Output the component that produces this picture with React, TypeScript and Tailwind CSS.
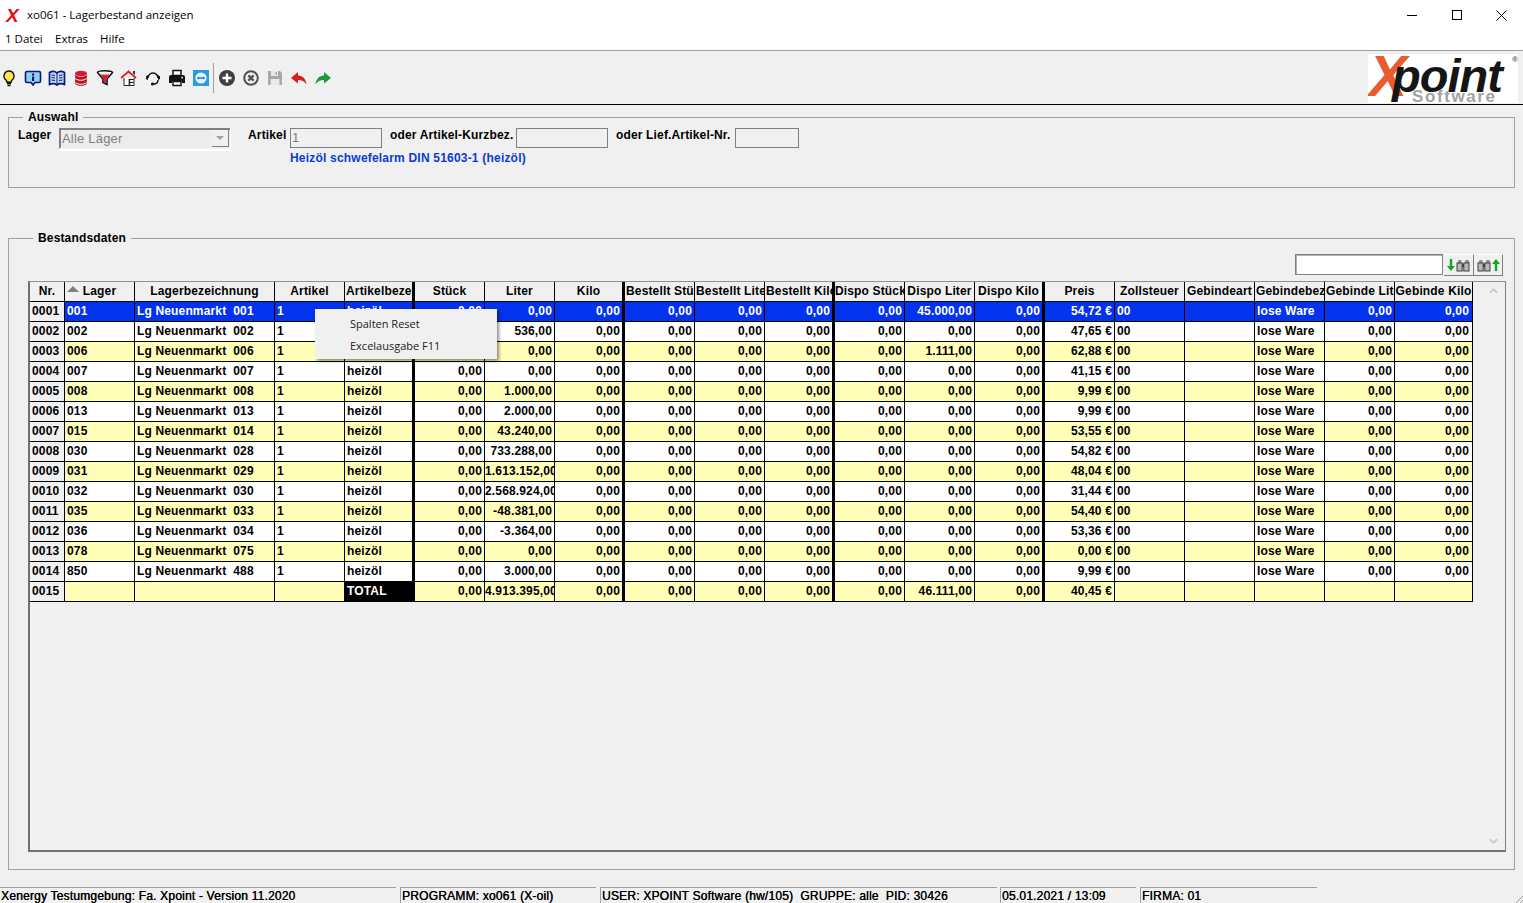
import React from "react";

type Col = { t: string; w: string; a: "l" | "r" | "c"; thick?: boolean; hl?: boolean };
const cols: Col[] = [
  { t: "Nr.", w: "w-[35px]", a: "c" },
  { t: "Lager", w: "w-[70px]", a: "c" },
  { t: "Lagerbezeichnung", w: "w-[140px]", a: "c" },
  { t: "Artikel", w: "w-[70px]", a: "c" },
  { t: "Artikelbezeichnung", w: "w-[70px]", a: "l", thick: true },
  { t: "Stück", w: "w-[70px]", a: "c" },
  { t: "Liter", w: "w-[70px]", a: "c" },
  { t: "Kilo", w: "w-[70px]", a: "c", thick: true },
  { t: "Bestellt Stück", w: "w-[70px]", a: "l" },
  { t: "Bestellt Liter", w: "w-[70px]", a: "l" },
  { t: "Bestellt Kilo", w: "w-[70px]", a: "l", thick: true },
  { t: "Dispo Stück", w: "w-[70px]", a: "c" },
  { t: "Dispo Liter", w: "w-[70px]", a: "c" },
  { t: "Dispo Kilo", w: "w-[70px]", a: "c", thick: true },
  { t: "Preis", w: "w-[70px]", a: "c" },
  { t: "Zollsteuer", w: "w-[70px]", a: "c" },
  { t: "Gebindeart", w: "w-[70px]", a: "c" },
  { t: "Gebindebez", w: "w-[70px]", a: "l" },
  { t: "Gebinde Liter", w: "w-[70px]", a: "l" },
  { t: "Gebinde Kilo", w: "w-[78px]", a: "c" },
];

const data: [string, string, string, string, string, string][] = [
  ["001", "001", "0,00", "0,00", "45.000,00", "54,72 €"],
  ["002", "002", "0,00", "536,00", "0,00", "47,65 €"],
  ["006", "006", "0,00", "0,00", "1.111,00", "62,88 €"],
  ["007", "007", "0,00", "0,00", "0,00", "41,15 €"],
  ["008", "008", "0,00", "1.000,00", "0,00", "9,99 €"],
  ["013", "013", "0,00", "2.000,00", "0,00", "9,99 €"],
  ["015", "014", "0,00", "43.240,00", "0,00", "53,55 €"],
  ["030", "028", "0,00", "733.288,00", "0,00", "54,82 €"],
  ["031", "029", "0,00", "1.613.152,00", "0,00", "48,04 €"],
  ["032", "030", "0,00", "2.568.924,00", "0,00", "31,44 €"],
  ["035", "033", "0,00", "-48.381,00", "0,00", "54,40 €"],
  ["036", "034", "0,00", "-3.364,00", "0,00", "53,36 €"],
  ["078", "075", "0,00", "0,00", "0,00", "0,00 €"],
  ["850", "488", "0,00", "3.000,00", "0,00", "9,99 €"],
];

function rowValues(i: number): { v: string; a: "l" | "r" }[] {
  const z = { v: "0,00", a: "r" as const };
  if (i === 14) {
    return [
      { v: "0015", a: "l" }, { v: "", a: "l" }, { v: "", a: "l" }, { v: "", a: "l" }, { v: "TOTAL", a: "l" },
      z, { v: "4.913.395,00", a: "r" }, z, z, z, z, z, { v: "46.111,00", a: "r" }, z, { v: "40,45 €", a: "r" },
      { v: "", a: "l" }, { v: "", a: "l" }, { v: "", a: "l" }, { v: "", a: "l" }, { v: "", a: "l" },
    ];
  }
  const d = data[i];
  return [
    { v: String(i + 1).padStart(4, "0"), a: "l" },
    { v: d[0], a: "l" },
    { v: "Lg Neuenmarkt  " + d[1], a: "l" },
    { v: "1", a: "l" },
    { v: "heizöl", a: "l" },
    { v: d[2], a: "r" },
    { v: d[3], a: "r" },
    z, z, z, z, z,
    { v: d[4], a: "r" },
    z,
    { v: d[5], a: "r" },
    { v: "00", a: "l" },
    { v: "", a: "l" },
    { v: "lose Ware", a: "l" },
    z, z,
  ];
}

function Row({ i }: { i: number }) {
  const selected = i === 0;
  const yellow = i % 2 === 0;
  const vals = rowValues(i);
  return (
    <div className="flex h-5 whitespace-pre">
      {cols.map((c, k) => {
        const v = vals[k];
        const nr = k === 0;
        const total = i === 14 && k === 4;
        const bg = nr ? "bg-[#f0f0f0] text-black" : total ? "bg-black text-white" : selected ? "bg-[#0433ee] text-white" : yellow ? "bg-[#ffffb8] text-black" : "bg-white text-black";
        const br = c.thick ? "border-r-[3px]" : "border-r";
        return (
          <div key={k} className={`${c.w} ${bg} ${br} ${v.a === "r" ? "text-right pr-[2px]" : "text-left pl-[2px]"} ${k === 19 ? "pr-[3px]" : ""} shrink-0 border-b border-black overflow-hidden leading-[19px]`}>
            {v.v}
          </div>
        );
      })}
    </div>
  );
}

function Header() {
  return (
    <div className="flex h-5">
      {cols.map((c, k) => (
        <div key={k} className={`${c.w} ${c.thick ? "border-r-[3px]" : "border-r"} ${c.a === "l" ? "text-left pl-px" : "text-center"} relative shrink-0 bg-[#f0f0f0] border-b border-black overflow-hidden whitespace-nowrap leading-[19px]`}>
          {k === 1 && <span className="absolute left-[2px] top-[4px] w-0 h-0 border-l-[6px] border-r-[6px] border-b-[6px] border-l-transparent border-r-transparent border-b-[#808080]" />}
          {c.t}
        </div>
      ))}
    </div>
  );
}

const Ico = ({ children }: { children: React.ReactNode }) => (
  <svg viewBox="0 0 18 18" className="w-[18px] h-[18px] mr-[6px] shrink-0">{children}</svg>
);

function Toolbar() {
  return (
    <div className="flex items-center">
      <Ico>
        <path d="M9 2a5 5 0 0 0-3 9c.7.7.8 1.5.9 2.2h4.2c.1-.7.2-1.5.9-2.2A5 5 0 0 0 9 2z" fill="#ffe54a" stroke="#111" strokeWidth="1.4" />
        <path d="M7 14.6h4M7.5 16.5h3" stroke="#111" strokeWidth="1.3" />
      </Ico>
      <Ico>
        <path d="M3 2.5h12a1.5 1.5 0 0 1 1.5 1.5v8a1.5 1.5 0 0 1-1.5 1.5h-4L9 16l-2-2.5H3A1.5 1.5 0 0 1 1.5 12V4A1.5 1.5 0 0 1 3 2.5z" fill="#8fd0f0" stroke="#0a1a70" strokeWidth="1.6" />
        <path d="M8 4.5h2.2v2H8zM8 7.5h2.2v4.5H8z" fill="#0a1a70" />
      </Ico>
      <Ico>
        <path d="M1.5 3.5C4 2 7 2.2 9 3.8c2-1.6 5-1.8 7.5-.3v12c-2.5-1-5.5-1-7.5.5-2-1.5-5-1.5-7.5-.5z" fill="#bcd7f2" stroke="#0a1a80" strokeWidth="1.7" />
        <path d="M9 4v11.5M3.5 6l3.5.5M3.5 8.5l3.5.5M3.5 11l3.5.5M14.5 6l-3.5.5M14.5 8.5L11 9M14.5 11l-3.5.5" stroke="#0a1a80" strokeWidth="1" />
      </Ico>
      <Ico>
        <ellipse cx="9" cy="4.5" rx="6" ry="2.8" fill="#d8182a" />
        <path d="M3 5v3c0 1.6 2.7 2.8 6 2.8s6-1.2 6-2.8V5c0 1.6-2.7 2.8-6 2.8S3 6.6 3 5z" fill="#c01020" />
        <path d="M3 9v3c0 1.6 2.7 2.8 6 2.8s6-1.2 6-2.8V9c0 1.6-2.7 2.8-6 2.8S3 10.6 3 9z" fill="#c01020" />
        <path d="M3 13v1c0 1.6 2.7 2.8 6 2.8s6-1.2 6-2.8v-1c0 1.6-2.7 2.8-6 2.8S3 14.6 3 13z" fill="#90101c" />
      </Ico>
      <Ico>
        <path d="M1.5 3.5c0-1 3.3-1.7 7.5-1.7s7.5.7 7.5 1.7L11 10v5.5L7 13.5V10z" fill="#fff" stroke="#111" strokeWidth="1.6" />
        <path d="M4.5 5.3c3 .6 6 .6 9 0L10.2 10v4.5L7.8 13v-3z" fill="#e01c2c" />
      </Ico>
      <Ico>
        <path d="M1 9l7.5-6.5L16 9" fill="none" stroke="#d8281c" strokeWidth="1.8" />
        <path d="M4 9v7.5h10V9" fill="#fff" stroke="#222" strokeWidth="1" />
        <path d="M13 2h2v4l-2-1.5z" fill="#333" />
        <text x="8" y="16" fontSize="9.5" fontWeight="700" fill="#111" fontFamily="Liberation Sans">F</text>
      </Ico>
      <Ico>
        <path d="M4 9a5 5 0 0 1 10 0" fill="none" stroke="#111" strokeWidth="1.6" />
        <path d="M2 7.5l2-1.5v5L2 10zM16 7.5L14 6v5l2-1z" fill="#111" />
        <path d="M14 11c0 2.5-2 4-4.5 4" fill="none" stroke="#111" strokeWidth="1.4" />
        <circle cx="8.5" cy="15" r="1.6" fill="#111" />
      </Ico>
      <Ico>
        <path d="M5 1.5h8v5H5z" fill="#fff" stroke="#111" strokeWidth="1.5" />
        <path d="M1 8a2 2 0 0 1 2-2h12a2 2 0 0 1 2 2v6h-3v-2H4v2H1z" fill="#111" />
        <path d="M5 12.5h8v4H5z" fill="#fff" stroke="#111" strokeWidth="1.4" />
        <circle cx="14.2" cy="8.6" r=".9" fill="#fff" />
      </Ico>
      <Ico>
        <rect x="1" y="1" width="16" height="16" fill="#2a9be0" />
        <circle cx="9" cy="9" r="5.6" fill="#e8f4fb" />
        <path d="M4.8 9l2-1.7v1h4.4v-1l2 1.7-2 1.7v-1H6.8v1z" fill="#1c7fc4" />
      </Ico>
      <div className="w-px h-[30px] bg-[#a0a0a0] -ml-[3px] mr-[4px]" />
      <Ico>
        <circle cx="9" cy="9" r="8" fill="#404040" />
        <path d="M9 4.5v9M4.5 9h9" stroke="#fff" strokeWidth="2.4" />
      </Ico>
      <Ico>
        <circle cx="9" cy="9" r="6.8" fill="none" stroke="#505050" strokeWidth="2" />
        <path d="M6.4 6.4l5.2 5.2M11.6 6.4l-5.2 5.2" stroke="#505050" strokeWidth="2.2" />
      </Ico>
      <Ico>
        <path d="M2 2h12l2 2v12H2z" fill="#a8a8a8" />
        <rect x="5" y="2" width="7" height="5" fill="#e8e8e8" />
        <rect x="9.5" y="3" width="1.5" height="3" fill="#a8a8a8" />
        <rect x="4.5" y="10" width="9" height="6" fill="#e8e8e8" />
      </Ico>
      <Ico>
        <path d="M8 3L1 9l7 5.5v-3.5c4 0 6.5 1.2 8.5 4.5C16 10 13 6.7 8 6.4z" fill="#d81e1e" />
      </Ico>
      <Ico>
        <path d="M10 3l7 6-7 5.5v-3.5c-4 0-6.5 1.2-8.5 4.5C2 10 5 6.7 10 6.4z" fill="#1c9a3c" />
      </Ico>
    </div>
  );
}

function Logo() {
  return (
    <div className="relative w-[150px] h-[49px] bg-white overflow-hidden mt-[1px] italic font-bold leading-none">
      <span className="absolute left-[1px] top-[-6px] text-[57px] text-[#e95c2e] tracking-[-2px]">X</span>
      <span className="absolute left-[24px] top-[-2px] text-[47px] text-[#151515] tracking-[-1px]">point</span>
      <span className="absolute left-[44px] top-[34px] text-[17px] text-[#a2a2a2] not-italic tracking-[1.6px]">Software</span>
      <span className="absolute left-[144px] top-[2px] text-[8px] text-[#555] not-italic">®</span>
    </div>
  );
}

function Binos() {
  return (
    <svg viewBox="0 0 14 14" className="w-[14px] h-[14px]">
      <path d="M1.5 5l1-3h3v3zM8.5 5l1-3h3l1 3z" fill="#8a8f8a" />
      <rect x="1" y="5" width="5.2" height="8" fill="#b4bab4" stroke="#404040" strokeWidth="1" />
      <rect x="7.8" y="5" width="5.2" height="8" fill="#b4bab4" stroke="#404040" strokeWidth="1" />
      <rect x="6" y="6" width="2" height="3" fill="#404040" />
    </svg>
  );
}

const Arrow = ({ up }: { up?: boolean }) => (
  <svg viewBox="0 0 8 12" className="w-2 h-3">
    <path d={up ? "M4 0l4 5H5.2v7H2.8V5H0z" : "M4 12L0 7h2.8V0h2.4v7H8z"} fill="#10a820" />
  </svg>
);

const inset = "border border-[#808080] bg-[#f0f0f0] h-[20px]";
const status = "h-[16px] border-t border-l border-[#a0a0a0] overflow-hidden whitespace-pre pl-px text-[12px] leading-[17px] tracking-[0.2px] font-normal [text-shadow:0.3px_0_0_#000]";

export default function App() {
  return (
    <div className="w-[1523px] h-[903px] bg-[#f0f0f0] flex flex-col overflow-hidden text-black text-[12px] font-bold tracking-[0.15px] font-['Liberation_Sans',sans-serif]">
      <div className="h-[30px] bg-white flex items-center font-normal font-['Open_Sans',sans-serif] text-[11.5px] tracking-normal">
        <span className="w-[27px] pl-[6px] text-[19px] font-black italic leading-none text-[#e01010] font-['Liberation_Sans',sans-serif]">X</span>
        <span>xo061 - Lagerbestand anzeigen</span>
        <div className="ml-auto flex items-center">
          <div className="w-[45px] flex justify-center"><div className="w-[10px] h-px bg-black" /></div>
          <div className="w-[45px] flex justify-center"><div className="w-[10px] h-[10px] border border-black" /></div>
          <div className="w-[45px] flex justify-center mr-[-1px]">
            <svg viewBox="0 0 11 11" className="w-[11px] h-[11px]"><path d="M.5.5l10 10M10.5.5l-10 10" stroke="#000" strokeWidth="1" /></svg>
          </div>
        </div>
      </div>
      <div className="h-[21px] bg-white border-b border-[#a0a0a0] flex items-center pb-[2px] font-normal font-['Open_Sans',sans-serif] text-[11.5px] tracking-normal">
        <span className="ml-[5px] w-[50px]">1 Datei</span>
        <span className="w-[45px]">Extras</span>
        <span>Hilfe</span>
      </div>
      <div className="h-[54px] border-b border-black flex items-center justify-between shrink-0">
        <Toolbar />
        <div className="mr-[5px]"><Logo /></div>
      </div>

      <fieldset className="mx-2 mt-[5px] h-[78px] border border-[#a0a0a0] pl-[9px] shrink-0 relative">
        <legend className="ml-[5px] px-[5px] leading-[14px]">Auswahl</legend>
        <div className="flex items-start mt-[4px]">
          <span className="w-[41px] leading-[15px]">Lager</span>
          <div className="w-[172px] h-[23px] bg-white pr-px pb-[2px]">
            <div className="h-[21px] bg-[#ececec] border-2 border-[#808080] border-r-0 border-b-[#f0f0f0] flex items-center justify-between text-[#808080] font-normal text-[13px]">
              <span className="pl-[1px] tracking-[0.2px]">Alle Läger</span>
              <span className="w-[17px] h-[17px] mr-px bg-[#f0f0f0] border-r border-b border-[#808080] flex items-center justify-center">
                <span className="w-0 h-0 border-l-[4px] border-r-[4px] border-t-[4px] border-l-transparent border-r-transparent border-t-[#a0a0a0]" />
              </span>
            </div>
          </div>
          <span className="ml-[17px] w-[42px] leading-[15px]">Artikel</span>
          <div className="flex flex-col">
            <div className="flex items-start">
              <div className={`${inset} w-[92px] text-[#808080] font-normal text-[13px] leading-[18px] pl-px`}>1</div>
              <span className="ml-[8px] w-[126px] leading-[15px]">oder Artikel-Kurzbez.</span>
              <div className={`${inset} w-[92px]`} />
              <span className="ml-[8px] w-[119px] leading-[15px]">oder Lief.Artikel-Nr.</span>
              <div className={`${inset} w-[64px]`} />
            </div>
            <span className="mt-[3px] leading-[15px] text-[#0b3bd6] tracking-[0.2px]">Heizöl schwefelarm DIN 51603-1 (heizöl)</span>
          </div>
        </div>
      </fieldset>

      <fieldset className="mx-2 mt-[43px] h-[639px] border border-[#a0a0a0] shrink-0 pl-[19px] pr-[8px]">
        <legend className="ml-[5px] px-[5px] leading-[14px]">Bestandsdaten</legend>
        <div className="h-[22px] mt-[9px] flex justify-end pr-[3px]">
          <div className="w-[148px] h-[21px] bg-white border border-[#808080] shadow-[inset_1px_1px_0_#b0b0b0]" />
          <div className="w-[30px] h-[22px] ml-px flex items-center justify-center gap-px border-r border-b border-[#808080] border-t-white border-t"><Arrow /><Binos /></div>
          <div className="w-[29px] h-[22px] flex items-center justify-center gap-px border-r border-b border-[#808080] border-t-white border-t"><Binos /><Arrow up /></div>
        </div>
        <div className="relative mt-[5px] h-[571px] border border-[#808080] border-t-[#909090] border-l-2 border-l-[#707070] border-b-2 border-b-[#707070] flex justify-between">
          <div className="flex flex-col">
            <Header />
            {Array.from({ length: 15 }, (_, i) => <Row key={i} i={i} />)}
          </div>
          <div className="w-[24px] flex flex-col items-center justify-between py-[6px]">
            <svg viewBox="0 0 10 6" className="w-[9px] h-[6px]"><path d="M1 5l4-4 4 4" fill="none" stroke="#c0c0c0" strokeWidth="1.5" /></svg>
            <svg viewBox="0 0 10 6" className="w-[9px] h-[6px]"><path d="M1 1l4 4 4-4" fill="none" stroke="#c0c0c0" strokeWidth="1.5" /></svg>
          </div>
          <div className="absolute left-[285px] top-[27px] w-[182px] h-[50px] bg-[#f0f0f0] shadow-[2px_2px_3px_rgba(0,0,0,0.45)] font-normal text-[#222] font-['Open_Sans',sans-serif] text-[11px] tracking-normal flex flex-col pl-[35px] justify-center gap-[7px] leading-[15px]">
            <span>Spalten Reset</span>
            <span>Excelausgabe F11</span>
          </div>
        </div>
      </fieldset>

      <div className="mt-[17px] flex relative">
        <div className={`${status} w-[396px] border-l-0`}>Xenergy Testumgebung: Fa. Xpoint - Version 11.2020</div>
        <div className={`${status} w-[196px] ml-[4px]`}>PROGRAMM: xo061 (X-oil)</div>
        <div className={`${status} w-[397px] ml-[4px]`}>USER: XPOINT Software (hw/105)  GRUPPE: alle  PID: 30426</div>
        <div className={`${status} w-[136px] ml-[3px]`}>05.01.2021 / 13:09</div>
        <div className={`${status} w-[177px] ml-[4px]`}>FIRMA: 01</div>
        <svg viewBox="0 0 8 8" className="absolute right-0 bottom-0 w-2 h-2"><path d="M8 1L1 8M8 5L5 8" stroke="#a0a0a0" strokeWidth="1" /></svg>
      </div>
    </div>
  );
}
